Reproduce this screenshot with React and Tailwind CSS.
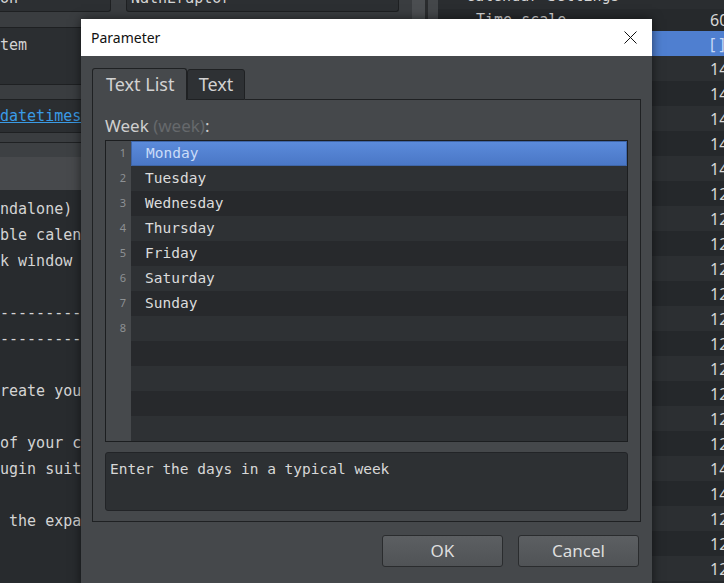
import React from 'react';

const days = ['Monday', 'Tuesday', 'Wednesday', 'Thursday', 'Friday', 'Saturday', 'Sunday'];

const codeLines = [
  'ndalone)',
  'ble calendar',
  'k window -',
  '',
  '-------------',
  '-------------',
  '',
  'reate your',
  '',
  'of your cale',
  'ugin suite',
  '',
  ' the expans',
];

const rightValues = [
  '14', '14', '14', '14', '14', '12', '12', '12', '12', '12', '12',
  '12', '12', '12', '12', '12', '14', '14', '12', '12', '12',
];

const CloseIcon = () => (
  <svg width="13" height="13" viewBox="0 0 13 13" fill="none">
    <path d="M0.5 0.5L12.5 12.5M12.5 0.5L0.5 12.5" stroke="#111" strokeWidth="1" />
  </svg>
);

const Background = () => (
  <div className="flex h-full w-full">
    {/* Left editor column */}
    <div className="flex w-[412px] shrink-0 flex-col font-['DejaVu_Sans_Mono',monospace] text-[15px] text-[#d4d4d4]">
      <div className="flex h-[19px] items-start">
        <div className="h-[12px] w-[111px] overflow-hidden rounded-br-[3px] border-r border-b border-[#1e2022] bg-[#2c2f32]">
          <div className="-mt-[12px] leading-[20px]">on</div>
        </div>
        <div className="ml-[15px] h-[12px] w-[273px] overflow-hidden rounded-b-[3px] border-x border-b border-[#1e2022] bg-[#2c2f32]">
          <div className="-mt-[12px] pl-[4px] leading-[20px]">NathEraptor</div>
        </div>
      </div>
      <div className="mt-[8px] h-[58px] border-y border-r border-[#1e2022] bg-[#2b2e31] pt-[7px] leading-[20px]">
        tem
      </div>
      <div className="mt-[14px] h-[34px] border-y border-r border-[#1e2022] bg-[#2b2e31] leading-[32px]">
        <span className="text-[#3a9be6] underline">datetimes</span>
      </div>
      <div className="h-[9px]" />
      <div className="h-[1px] bg-[#1f2123]" />
      <div className="h-[14px] bg-[#3d4043]" />
      <div className="h-[33px] bg-[#47494c]" />
      <div className="flex-1 overflow-hidden bg-[#282b2e] pt-[6px] leading-[26px]">
        {codeLines.map((line, i) => (
          <div key={i} className="h-[26px] whitespace-pre">
            {line}
          </div>
        ))}
      </div>
    </div>

    {/* Splitter */}
    <div className="flex w-[26px] shrink-0">
      <div className="w-[13px] bg-[#4b4e51]" />
      <div className="w-[3px] bg-[#2a2c2e]" />
      <div className="w-[10px] bg-[#44474a]" />
    </div>

    {/* Right parameter list */}
    <div className="flex-1 overflow-hidden bg-[#26292c]">
      <div className="-mt-[16px] flex flex-col">
        <div className="flex h-[25px] items-center bg-[#2a2d30] pl-[28px] font-['DejaVu_Sans_Mono',monospace] text-[15px] text-[#d4d4d4]">
          Calendar Settings
        </div>
        <div className="flex h-[22px] items-center bg-[#26292c]">
          <div className="w-[272px] shrink-0 pl-[38px] font-['DejaVu_Sans_Mono',monospace] text-[15px] text-[#d4d4d4]">Time scale</div>
          <div className="whitespace-nowrap font-['Noto_Sans',sans-serif] text-[16px] text-[#d8d8d8]">60</div>
        </div>
        <div className="flex h-[25px] items-center bg-[#4f7fd0]">
          <div className="w-[272px] shrink-0" />
          <div className="whitespace-nowrap font-['Noto_Sans',sans-serif] text-[16px] text-[#c6d8f6]">[ ]</div>
        </div>
        {rightValues.map((v, i) => (
          <div
            key={i}
            className={`flex h-[25px] items-center ${i % 2 === 0 ? 'bg-[#2c2f32]' : 'bg-[#25282b]'}`}
          >
            <div className="w-[272px] shrink-0" />
            <div className="whitespace-nowrap font-['Noto_Sans',sans-serif] text-[16px] text-[#d8d8d8]">{v}</div>
          </div>
        ))}
      </div>
    </div>
  </div>
);

const Dialog = () => (
  <div className="absolute left-[81px] top-[19px] flex h-[570px] w-[571px] flex-col bg-[#45484b] shadow-[0_0_10px_rgba(0,0,0,0.55)]">
    {/* Title bar */}
    <div className="flex h-[37px] items-center justify-between bg-white pl-[10px] pr-[15px]">
      <span className="font-['Noto_Sans',sans-serif] text-[14px] text-[#111]">Parameter</span>
      <CloseIcon />
    </div>

    <div className="flex flex-col px-[11px] pt-[12px] font-['Noto_Sans',sans-serif]">
      {/* Tabs */}
      <div className="flex h-[32px] items-end">
        <div className="flex h-[32px] w-[95px] items-center rounded-t-[3px] border-x border-t border-[#1f2123] bg-[#46494c] pl-[13px] text-[18px] text-[#d2d2d2]">
          Text List
        </div>
        <div className="flex h-[31px] w-[58px] items-center justify-center rounded-t-[3px] border border-[#1f2123] bg-[#2e3134] text-[18px] text-[#d2d2d2]">
          Text
        </div>
        <div className="flex-1 border-b border-[#1f2123]" />
      </div>

      {/* Tab pane */}
      <div className="flex h-[422px] flex-col border-x border-b border-[#1f2123] px-[12px] pt-[15px]">
        <div className="h-[22px] text-[17px] leading-[22px] text-[#cfcfcf]">
          Week <span className="text-[#66696c]">(week)</span>:
        </div>

        <div className="mt-[3px] flex h-[302px] border border-[#1c1e20] bg-[#26292c]">
          <div className="flex w-[25px] flex-col bg-[#46494c]">
            {Array.from({ length: 12 }).map((_, i) => (
              <div key={i} className="flex h-[25px] items-center justify-end pr-[5px] text-[11px] text-[#8e9194]">
                {i < 8 ? i + 1 : ''}
              </div>
            ))}
          </div>
          <div className="flex flex-1 flex-col font-['DejaVu_Sans_Mono',monospace] text-[14.5px]">
            {Array.from({ length: 12 }).map((_, i) => {
              const selected = i === 0;
              const bg = selected
                ? 'border border-[#3f66a8] bg-gradient-to-b from-[#5b8bdb] to-[#4a77c6] text-[#cadcf8]'
                : i % 2 === 1
                  ? 'bg-[#2e3134] text-[#dcdcdc]'
                  : 'bg-[#27292c] text-[#dcdcdc]';
              return (
                <div key={i} className={`flex h-[25px] items-center pl-[14px] ${bg}`}>
                  {days[i] || ''}
                </div>
              );
            })}
          </div>
        </div>

        <div className="mt-[10px] h-[59px] rounded-[3px] border border-[#222427] bg-[#2d3033] pl-[4px] pt-[6px] font-['DejaVu_Sans_Mono',monospace] text-[14.5px] leading-[20px] text-[#d8d8d8]">
          Enter the days in a typical week
        </div>
      </div>

      {/* Buttons */}
      <div className="mt-[13px] flex justify-end gap-[15px] pr-[2px]">
        <button className="h-[32px] w-[121px] rounded-[3px] border border-[#2a2c2e] bg-gradient-to-b from-[#5c5f62] to-[#505356] text-[17px] text-[#dedede]">
          OK
        </button>
        <button className="h-[32px] w-[121px] rounded-[3px] border border-[#2a2c2e] bg-gradient-to-b from-[#5c5f62] to-[#505356] text-[17px] text-[#dedede]">
          Cancel
        </button>
      </div>
    </div>
  </div>
);

export default function App() {
  return (
    <div className="relative h-[583px] w-[724px] overflow-hidden bg-[#3a3d40]">
      <Background />
      <Dialog />
    </div>
  );
}
